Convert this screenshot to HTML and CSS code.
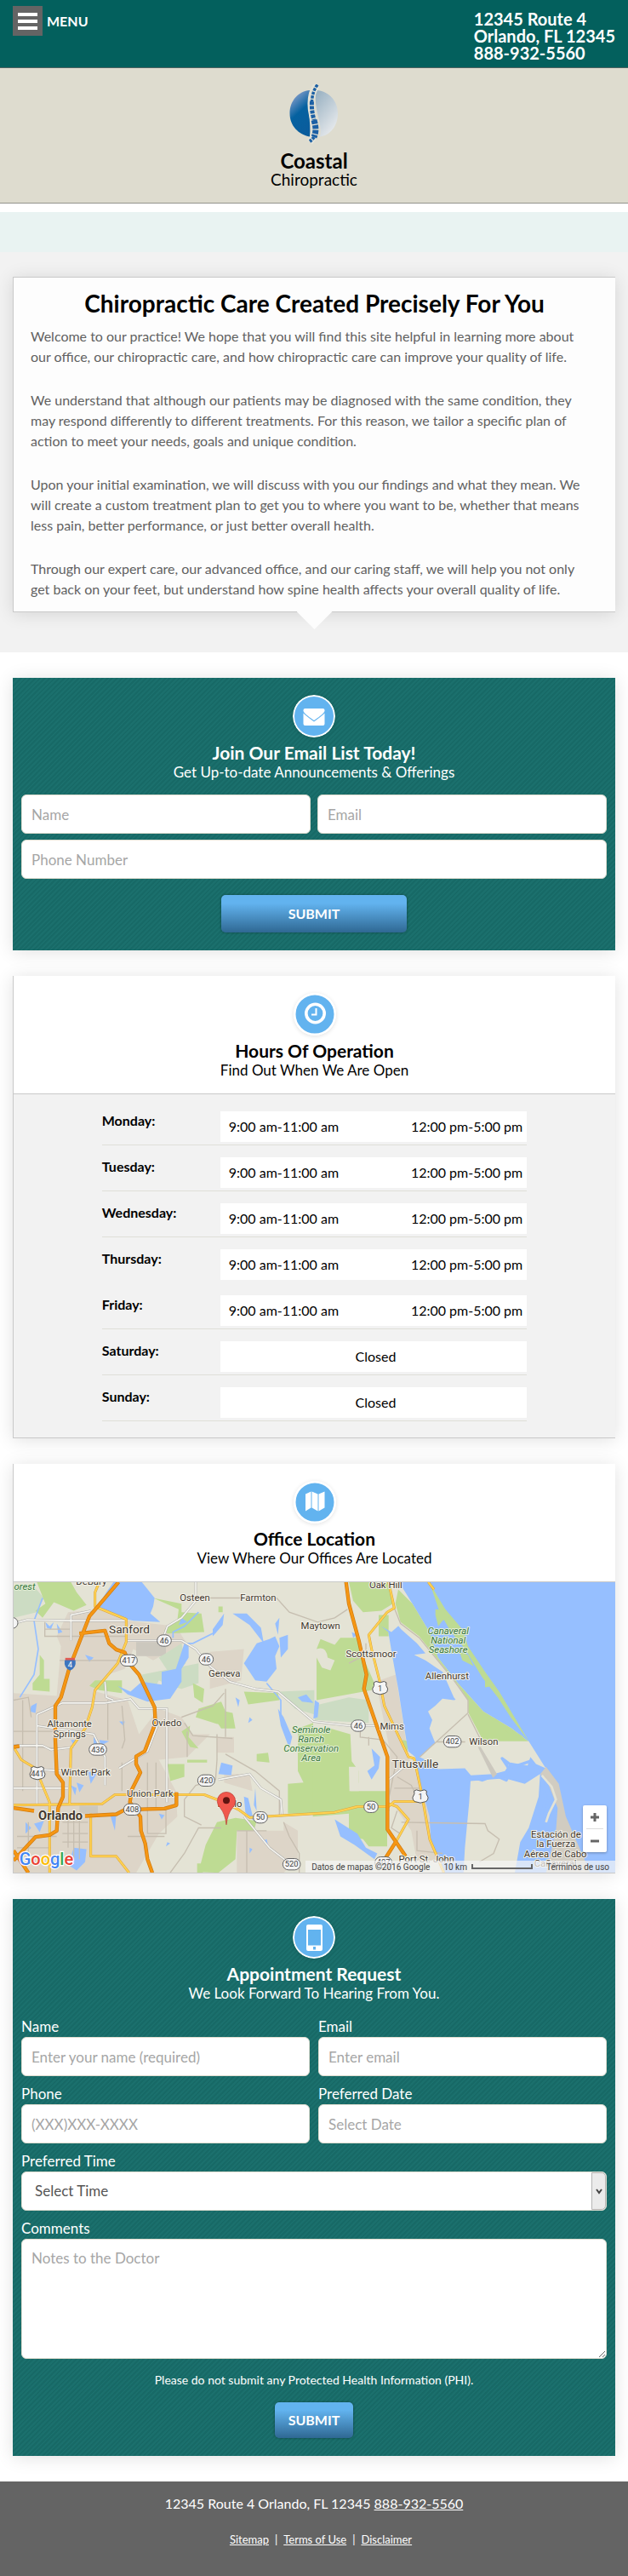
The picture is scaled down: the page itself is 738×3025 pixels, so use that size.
FILE: index.html
```html
<!DOCTYPE html>
<html lang="en">
<head>
<meta charset="utf-8">
<meta name="viewport" content="width=device-width, initial-scale=1">
<title>Coastal Chiropractic</title>
<link rel="stylesheet" href="styles.css">
</head>
<body>
<header class="topbar">
  <button class="menu" type="button">
    <span class="menu-icon"><span class="bar"></span><span class="bar"></span><span class="bar"></span></span>
    <span>MENU</span>
  </button>
  <address class="address">12345 Route 4<br>Orlando, FL 12345<br>888-932-5560</address>
</header>

<section class="brand">
  <svg class="brand-logo" viewBox="0 0 58 70" aria-hidden="true">
    <defs>
      <linearGradient id="lobe-left" x1="0.2" y1="0" x2="0.6" y2="1"><stop offset="0.1" stop-color="#7d9ac8"/><stop offset="0.5" stop-color="#0561a0"/><stop offset="1" stop-color="#0a5c9c"/></linearGradient>
      <linearGradient id="lobe-right" x1="0" y1="0" x2="0.6" y2="1"><stop offset="0.1" stop-color="#9db4c4"/><stop offset="1" stop-color="#e6e9ec"/></linearGradient>
    </defs>
    <path d="M24 7C11 8 0.500 19 0.500 34S11 59 24 61.500C26 44 20 27 24 7Z" fill="url(#lobe-left)"/>
    <path d="M32 7C46 8 57 19 57 34S48 60 36 61.500C40 46 27 28 32 7Z" fill="url(#lobe-right)"/>
    <path d="M32 1C24 12 25 27 27 36S34 58 24 68" fill="none" stroke="#e4e3d8" stroke-width="8"/>
    <path d="M33 0.500C29 6 27 12 26.500 20" fill="none" stroke="#1c60a4" stroke-width="3.500" stroke-dasharray="3.500 1.200"/>
    <path d="M26.500 20C26 28 27 34 29 42" fill="none" stroke="#1c60a4" stroke-width="5" stroke-dasharray="4 1.300"/>
    <path d="M29 42C31 49 32 55 29 62" fill="none" stroke="#1c60a4" stroke-width="7" stroke-dasharray="4.600 1.300"/>
    <path d="M29 62Q27 65 24 67" fill="none" stroke="#1c60a4" stroke-width="4" stroke-dasharray="3 1.200"/>
  </svg>
  <p class="brand-name">Coastal</p>
  <p class="brand-kind">Chiropractic</p>
</section>
<div class="strip"></div>

<main>
<section class="intro">
  <article class="card welcome">
    <h1>Chiropractic Care Created Precisely For You</h1>
    <p>Welcome to our practice! We hope that you will find this site helpful in learning more about our office, our chiropractic care, and how chiropractic care can improve your quality of life.</p>
    <p>We understand that although our patients may be diagnosed with the same condition, they may respond differently to different treatments. For this reason, we tailor a specific plan of action to meet your needs, goals and unique condition.</p>
    <p>Upon your initial examination, we will discuss with you our findings and what they mean. We will create a custom treatment plan to get you to where you want to be, whether that means less pain, better performance, or just better overall health.</p>
    <p>Through our expert care, our advanced office, and our caring staff, we will help you not only get back on your feet, but understand how spine health affects your overall quality of life.</p>
  </article>
</section>

<div class="stack">
<section class="panel">
  <div class="head">
    <svg class="badge" viewBox="0 0 50 50" aria-hidden="true"><circle cx="25" cy="25" r="24" fill="#62b3ef" stroke="#fff" stroke-width="2"/><path d="M14.500 16h21q2 0 2 2v1Q37 22 25 30 13 22 12.500 19v-1q0-2 2-2Z" fill="#fff"/><path d="M12.500 21.500Q16 25 25 31.500 34 25 37.500 21.500V34q0 2-2 2h-21q-2 0-2-2Z" fill="#fff"/></svg>
    <h2>Join Our Email List Today!</h2>
    <p class="sub">Get Up-to-date Announcements &amp; Offerings</p>
  </div>
  <form class="signup">
    <input class="field" type="text" placeholder="Name" aria-label="Name">
    <input class="field" type="email" placeholder="Email" aria-label="Email">
    <input class="field full" type="tel" placeholder="Phone Number" aria-label="Phone Number">
    <button class="submit wide" type="button">SUBMIT</button>
  </form>
</section>

<section class="card section-card">
  <div class="head">
    <svg class="badge" viewBox="0 0 50 50" aria-hidden="true"><circle cx="25" cy="25" r="24" fill="#62b3ef" stroke="#fff" stroke-width="3"/><circle cx="25.500" cy="24" r="10.700" fill="none" stroke="#fff" stroke-width="3.600"/><path d="M26.500 18v7.500H21" fill="none" stroke="#fff" stroke-width="2"/></svg>
    <h2>Hours Of Operation</h2>
    <p class="sub">Find Out When We Are Open</p>
  </div>
  <div class="hours-body">
    <table class="hours">
      <tbody>
        <tr><th scope="row">Monday:</th><td><div class="slot"><span>9:00 am-11:00 am</span><span>12:00 pm-5:00 pm</span></div></td></tr>
        <tr><th scope="row">Tuesday:</th><td><div class="slot"><span>9:00 am-11:00 am</span><span>12:00 pm-5:00 pm</span></div></td></tr>
        <tr><th scope="row">Wednesday:</th><td><div class="slot"><span>9:00 am-11:00 am</span><span>12:00 pm-5:00 pm</span></div></td></tr>
        <tr class="plain"><th scope="row">Thursday:</th><td><div class="slot"><span>9:00 am-11:00 am</span><span>12:00 pm-5:00 pm</span></div></td></tr>
        <tr><th scope="row">Friday:</th><td><div class="slot"><span>9:00 am-11:00 am</span><span>12:00 pm-5:00 pm</span></div></td></tr>
        <tr><th scope="row">Saturday:</th><td><div class="slot closed">Closed</div></td></tr>
        <tr><th scope="row">Sunday:</th><td><div class="slot closed">Closed</div></td></tr>
      </tbody>
    </table>
  </div>
</section>

<section class="card section-card">
  <div class="head">
    <svg class="badge" viewBox="0 0 50 50" aria-hidden="true"><circle cx="25" cy="25" r="24" fill="#62b3ef" stroke="#fff" stroke-width="3"/><path d="M14 15.500L20.500 12.500V31.500L14 35.500ZM21.500 12.500L28.500 15.500V35.500L21.500 31.500ZM29.500 15.500L36.500 12.500V31.500L29.500 35.500Z" fill="#fff"/></svg>
    <h2>Office Location</h2>
    <p class="sub">View Where Our Offices Are Located</p>
  </div>
  <div class="map">
    <svg class="map-art" viewBox="48 24 2121 1024" preserveAspectRatio="xMidYMid slice" role="img" aria-label="Map of Orlando and Titusville">
      <defs>
        <g id="shield"><path d="M-22 -20L-14 -24 0 -20 14 -24 22 -20Q18 -10 27 2 27 16 16 18L0 22-16 18Q-27 16-27 2-18-10-22-20Z" fill="#f4f4f4" stroke="#555" stroke-width="3"/></g>
      </defs>
      <rect x="40" y="20" width="2140" height="1040" fill="#e4e3d5"/>
      <!-- urban areas -->
      <g fill="#ddd5c8">
        <path d="M48 415L200 425 215 250 200 215 240 130 360 120 450 160 620 180 655 235 540 300 470 260 440 330 380 350 340 410 450 440 490 560 560 470 640 500 680 560 740 560 660 640 560 650 620 760 625 850 560 910 480 1048 48 1048Z"/>
        <path d="M740 270L860 260 850 370 740 400ZM765 570H825V625H765ZM870 900H1000V870L1050 900V1000L1000 1048H835V900ZM790 700L880 700 890 760 790 730Z"/>
        <path d="M1325 375L1395 350 1440 640 1470 700 1525 870 1560 1000 1470 1010 1450 900 1375 790 1375 620Z"/>
      </g>
      <path d="M480 235H585V285H480ZM280 812H345V840H280Z" fill="#ccc8be"/>
      <!-- parks and reserves -->
      <g fill="#ccdcc3">
        <path d="M48 40H120L155 80 130 130 48 150ZM560 290L640 240 655 310 600 350 580 320ZM500 350L700 310 700 380 640 400 600 390 560 370 540 410 500 380ZM980 410L1108 405V490L1040 470ZM1104 460L1230 430 1300 440V520L1110 510Z"/>
      </g>
      <g fill="#bedb93">
        <path d="M130 24H250L270 60 305 105 260 125 190 95 150 150 125 125 160 100ZM540 80L630 120 625 160 580 190 590 205 720 200 710 135 640 130 640 100ZM335 370L430 370 430 415 350 405 315 390ZM140 280L155 300 155 365 175 365 175 410 115 405 115 380 140 350ZM680 380L720 400 715 450 685 430ZM700 470L780 445 795 480 820 485 830 540 780 540 770 525 690 500ZM860 410L980 415 985 440 875 455ZM905 630L945 625 950 660 905 655ZM1050 540L1104 520V840H1015V735L1070 730 1050 690ZM765 870L830 855 905 865 895 900H835L830 1000 770 1048 700 1045 725 950ZM640 550L670 530 665 570 700 610 670 605ZM590 665L650 665 650 710 600 725ZM660 650H730V660H660ZM770 110H785V130H770ZM695 1015H715V1048H695Z"/>
        <path d="M1103 540L1165 540 1235 560 1240 655 1265 690V730L1235 760H1365V955L1300 955 1280 930 1230 920V840L1103 850ZM1116 260L1130 225 1180 245 1200 220 1265 220 1285 300 1320 380 1310 405 1116 440 1116 390ZM1230 24H1370L1385 100 1345 125 1280 130 1245 90ZM1335 140H1370V215H1335ZM1420 580L1440 585 1435 630 1415 600Z"/>
      </g>
      <path d="M1104 265Q1150 240 1155 290L1180 300 1165 335 1135 325 1116 290Z" fill="#e4e3d5"/>
      <path d="M1230 675H1265V760H1232Z" fill="#e4e3d5"/>
      <!-- ocean, lagoons and lakes -->
      <g fill="#96bfff">
        <path d="M1344 180L1369 200 1384 290 1404 400 1424 530 1439 620 1464 640 1484 740 1514 850 1519 930 1564 1048H2180V24H1405L1394 100 1414 170 1380 200Z"/>
        <path d="M375 60L400 24H500L545 80 540 110 530 135 565 165 470 160 420 150 345 110ZM415 390L460 410 500 375 570 385 570 340 620 330 650 240 665 240 665 290 640 330 640 375 600 435 520 445 450 420ZM905 240L950 225 970 215 985 250 970 285 975 330 940 375 900 370 860 310ZM985 220L1015 210V260L990 290ZM780 660L820 670 815 705 770 700ZM980 470L1000 500 1030 570 1020 610 990 530ZM1310 610L1340 640 1335 680 1310 720 1295 690 1320 670ZM260 960L305 965 300 1010 270 1040 240 1020ZM1180 860L1260 910 1290 960 1330 980 1320 1000 1250 950 1200 920ZM270 730L295 740 280 765ZM110 460L130 450 125 485 105 480Z"/>
        <path d="M160 165l15 15 15-15-10 25-15-5ZM200 170l20 30-15 5ZM300 280l30 10-15 15ZM120 875l35-10-15 40ZM90 870l20 20-20 20ZM250 580l25 0-15 20ZM310 690l30 10-20 35ZM330 570l20 25-20 5ZM390 850l20-10-5 60ZM250 740l20 10-5 25ZM860 780l15 5 20 80-30-30ZM880 500l10 10-15 10ZM900 750l5 80-10-20ZM970 170l15-20-5 60ZM750 190l40-55-5 40-35 40ZM820 135l50 0 50 50 10 55-50-65ZM640 150l20 15-30 10ZM560 840l20 5-10 15ZM880 960l10 5-10 15ZM590 940l10 5-15 10ZM930 935l10-5 5 20ZM420 515l20 0-5 15ZM1240 200l20 10-15 10ZM1050 430l30-10 25 30-40-5ZM830 430l15 10-5 25ZM350 580l35 5-30 15ZM1110 440l15 10-5 50-15 5Z"/>
      </g>
      <path d="M150 80L120 160 135 260 120 350 70 430M700 130L650 180 610 200 610 220M760 200L680 240 660 240M940 380L990 440 990 490" fill="none" stroke="#96bfff" stroke-width="5"/>
      <!-- barrier islands -->
      <path d="M1394 60L1410 30 1454 100 1514 200 1544 290 1614 380 1704 480 1804 540 1864 586 1704 586 1649 490 1600 430 1560 340 1500 300 1460 280 1500 275 1470 240 1414 190 1390 160Z" fill="#e4e3d5"/>
      <path d="M1404 50L1454 100 1514 200 1544 290 1614 380 1704 480 1804 540 1864 586H1704L1651 490V440L1614 385 1538 290 1478 215 1412 165 1394 100Z" fill="#bedb93"/>
      <path d="M1514 24L1540 70 1570 120 1630 190 1650 250 1710 340 1760 410 1865 586 1800 500 1755 430 1700 360 1640 260 1590 200 1550 130Z" fill="#bedb93"/>
      <path d="M1535 120l40 5-10 10 20 10-25 15-15 20-10-40ZM1620 270l30 10 20 40-40-20ZM1710 360l30 30-30 5ZM1740 500l50 40 60 30-60-15Z" fill="#bedb93"/>
      <path d="M1509 480L1534 460 1560 435 1600 440 1634 430 1649 480 1704 585 1864 585 1924 680 1890 665 1870 640 1860 670 1800 660 1780 690 1740 700 1660 705 1639 680 1544 683 1520 660 1479 640 1534 590 1514 540 1524 510Z" fill="#e4e3d5"/>
      <path d="M1659 725L1780 715 1850 735 1904 700 1899 780 1864 890 1834 940 1815 1048H1634L1639 960 1654 800Z" fill="#e4e3d5"/>
      <path d="M1640 705L1700 722 1745 705 1785 722 1800 690 1770 645 1810 675 1870 655 1900 690M1910 720L1925 790 1905 860" fill="none" stroke="#96bfff" stroke-width="10" stroke-linejoin="round"/>
      <path d="M1925 675L1970 735 1995 850 2060 1000 2080 1048H1925L1960 900 1966 820 1935 740 1905 700Z" fill="#d1ccc1"/>
      <path d="M1910 705L1945 745 1960 790 1935 840 1925 870" fill="none" stroke="#e4e3d5" stroke-width="8"/>
      <path d="M1685 605H1695L1752 700 1738 714Z" fill="#ccc8be"/>
      <!-- minor roads -->
      <g fill="none" stroke="#c6beb0" stroke-width="4">
        <path d="M740 80H975L1020 130 1120 165 1180 150 1225 120M158 165V215H445M160 190H250M210 300H430M795 400V570M765 560V650L760 720 690 740 650 790V850L710 880M870 900V1048M1000 870L1020 920 1055 980V1048M835 900H940M640 500L750 460 790 415M650 520L680 565 820 575M795 630L900 690 985 760V850M660 640V550M520 660V910H585V820M430 660V760M550 660V820M380 440V580M430 460L440 580 430 610M48 440L100 430 110 500M48 550H210M48 600 210 610M80 440V760M60 920H200M60 960H180M100 870V1010M220 870H310M220 910H310M220 940H310M260 840V1000M280 840V1000M240 840V960M600 1048L650 980 700 890 780 890M450 920H580M1270 530V570L1350 580 1400 640 1370 790M1300 570V600M1400 710L1450 740 1470 780M1390 750H1480M1400 830L1380 890 1410 910M1415 870 1520 872 1710 875 1720 900 1760 930 1740 980 1690 1010M1480 640L1650 485 1650 440 1600 370 1535 290 1478 220 1412 170 1390 115M1650 490 1700 590M1540 587H1640M1470 900V970L1560 980M1290 240V280L1230 310"/>
      </g>
      <path d="M48 170L95 157 250 160H445M250 230V140L320 125M690 24V90L640 150 590 180 570 235M450 230H640L690 260 740 320 810 375 900 400 980 410 1104 515 1230 530H1330M130 810V490L220 450 370 450 460 435 490 470H588V800M370 375 375 430 400 440M48 600L150 600 180 615 260 605M130 530L330 560 370 640V740M150 685L220 690M420 680L470 650 520 620 555 530M770 720L880 700 920 750 990 790 995 850M48 750H240M860 850L950 960 1040 1030M1370 830V720L1430 670" fill="none" stroke="#aaa" stroke-width="8"/>
      <path d="M48 170L95 157 250 160H445M250 230V140L320 125M690 24V90L640 150 590 180 570 235M450 230H640L690 260 740 320 810 375 900 400 980 410 1104 515 1230 530H1330M130 810V490L220 450 370 450 460 435 490 470H588V800M370 375 375 430 400 440M48 600L150 600 180 615 260 605M130 530L330 560 370 640V740M150 685L220 690M420 680L470 650 520 620 555 530M770 720L880 700 920 750 990 790 995 850M48 750H240M860 850L950 960 1040 1030M1370 830V720L1430 670" fill="none" stroke="#f6f5ef" stroke-width="5"/>
      <!-- main roads -->
      <g fill="none" stroke-linejoin="round">
        <g stroke="#dba23a" stroke-width="9"><path d="M350 24L335 60 335 110 445 155V235L415 310 335 405 325 465 300 540 250 610 245 810M48 605L75 650 125 680 175 800V1048M48 810L360 805 405 773H720L790 800 840 825 880 853 1180 835 1260 815 1370 815 1390 797 1485 797M320 840V990H410L455 1048M1510 24L1530 50M1370 24L1390 115 1365 130 1300 210 1310 260 1340 380 1355 460 1440 640 1460 645 1485 760 1515 930 1565 1048M1370 805L1400 815 1440 860 1395 940"/></g>
        <path d="M350 24L335 60 335 110 445 155V235L415 310 335 405 325 465 300 540 250 610 245 810M48 605L75 650 125 680 175 800V1048M48 810L360 805 405 773H720L790 800 840 825 880 853 1180 835 1260 815 1370 815 1390 797 1485 797M320 840V990H410L455 1048M1510 24L1530 50M1370 24L1390 115 1365 130 1300 210 1310 260 1340 380 1355 460 1440 640 1460 645 1485 760 1515 930 1565 1048M1370 805L1400 815 1440 860 1395 940" stroke="#ffd251" stroke-width="6"/>
        <g stroke="#cf7a10" stroke-width="13"><path d="M418 24L315 145 245 325 215 430 195 460V580L200 700 222 730V780L205 820 200 900 175 915 125 922 48 1005M280 205L370 195 385 240 410 262 440 272 455 310 490 350 545 465 548 520 510 620 480 638 480 665 495 695 465 755 458 800 495 850 497 900 512 945 520 1000 537 1048M48 820L120 830M300 848L410 842 440 826 580 822 622 810V765M48 605L68 602M1220 24L1230 100 1265 230 1292 350 1283 400 1366 640V895L1430 990M1395 940L1360 995M48 970 100 1048"/></g>
        <path d="M418 24L315 145 245 325 215 430 195 460V580L200 700 222 730V780L205 820 200 900 175 915 125 922 48 1005M280 205L370 195 385 240 410 262 440 272 455 310 490 350 545 465 548 520 510 620 480 638 480 665 495 695 465 755 458 800 495 850 497 900 512 945 520 1000 537 1048M48 820L120 830M300 848L410 842 440 826 580 822 622 810V765M48 605L68 602M1220 24L1230 100 1265 230 1292 350 1283 400 1366 640V895L1430 990M1395 940L1360 995M48 970 100 1048" stroke="#f59613" stroke-width="9"/>
      </g>
      <!-- road shields -->
      <g fill="#f4f4f4" stroke="#666" stroke-width="3">
        <rect x="554" y="210" width="50" height="40" rx="20"/><rect x="702" y="276" width="50" height="40" rx="20"/><rect x="424" y="280" width="60" height="40" rx="20"/><rect x="314" y="594" width="62" height="40" rx="20"/><rect x="697" y="703" width="60" height="40" rx="20"/><rect x="436" y="805" width="60" height="40" rx="20"/><rect x="893" y="833" width="50" height="40" rx="20"/><rect x="997" y="998" width="62" height="40" rx="20"/><rect x="1238" y="510" width="50" height="40" rx="20"/><rect x="1283" y="796" width="50" height="40" rx="20"/><rect x="1564" y="566" width="62" height="40" rx="20"/><rect x="1322" y="992" width="60" height="40" rx="20"/><circle cx="44" cy="168" r="19"/>
      </g>
      <use href="#shield" x="132" y="698"/><use href="#shield" x="1340" y="398"/><use href="#shield" x="1482" y="780"/>
      <path d="M228 300Q248 288 266 300 270 326 247 336 224 326 228 300Z" fill="#3d75be"/><path d="M230 291H264V299H230Z" fill="#e25a52"/>
      <g class="map-num">
        <text x="579" y="240">46</text><text x="727" y="306">46</text><text x="454" y="310">417</text><text x="345" y="624">436</text><text x="727" y="733">420</text><text x="466" y="835">408</text><text x="918" y="863">50</text><text x="1028" y="1028">520</text><text x="1263" y="540">46</text><text x="1308" y="826">50</text><text x="1595" y="596">402</text><text x="1352" y="1022">407</text><text x="132" y="709">441</text><text x="1340" y="409">1</text><text x="1482" y="791">1</text><text class="interstate" x="247" y="326">4</text>
      </g>
      <g class="map-place">
        <text x="322" y="32">DeBary</text><text x="687" y="92">Osteen</text><text x="910" y="92">Farmton</text><text x="1130" y="190">Maytown</text><text x="791" y="358">Geneva</text><text x="588" y="531">Oviedo</text><text x="245" y="535">Altamonte</text><text x="245" y="572">Springs</text><text x="302" y="706">Winter Park</text><text x="529" y="780">Union Park</text><text x="810" y="818">Bithlo</text><text x="1308" y="289">Scottsmoor</text><text x="1360" y="46">Oak Hill</text><text x="1576" y="366">Allenhurst</text><text x="1382" y="543">Mims</text><text x="1705" y="598">Wilson</text><text x="1504" y="1012">Port St. John</text><text x="1960" y="925">Estación de</text><text x="1960" y="959">la Fuerza</text><text x="1958" y="993">Aérea de Cabo</text><text x="1958" y="1027">Cañaveral</text>
        <text class="town" x="456" y="204">Sanford</text><text class="town" x="1464" y="678">Titusville</text><text class="city" x="213" y="863">Orlando</text>
      </g>
      <g class="map-park"><text x="87" y="52">orest</text><text x="1097" y="556">Seminole</text><text x="1097" y="588">Ranch</text><text x="1097" y="622">Conservation</text><text x="1097" y="655">Area</text><text x="1580" y="207">Canaveral</text><text x="1580" y="240">National</text><text x="1580" y="273">Seashore</text></g>
      <path d="M798 879Q794 840 776 819A32 32 0 1 1 820 819Q802 840 798 879Z" fill="#f1574c" stroke="#b63a32" stroke-width="2"/><circle cx="798" cy="793" r="12" fill="#5f1410"/>
      <text class="map-logo" x="68" y="1022"><tspan fill="#4285f4">G</tspan><tspan fill="#ea4335">o</tspan><tspan fill="#fbbc05">o</tspan><tspan fill="#4285f4">g</tspan><tspan fill="#34a853">l</tspan><tspan fill="#ea4335">e</tspan></text>
    </svg>
    <div class="zoom"><button type="button" aria-label="Zoom in"><svg viewBox="0 0 12 12"><path d="M1 6H11M6 1V11"/></svg></button><button type="button" aria-label="Zoom out"><svg viewBox="0 0 12 12"><path d="M1 6H11"/></svg></button></div>
    <div class="credit"><span>Datos de mapas ©2016 Google</span><span class="scale">10 km <span class="ruler"></span></span><span>Términos de uso</span></div>
  </div>
</section>

<section class="panel">
  <div class="head">
    <svg class="badge" viewBox="0 0 50 50" aria-hidden="true"><circle cx="25" cy="25" r="24" fill="#62b3ef" stroke="#fff" stroke-width="2"/><path fill-rule="evenodd" d="M18 10H33Q35 10 35 12V39Q35 41 33 41H18Q16 41 16 39V12Q16 10 18 10ZM18 16V34.500H33V16ZM24 36V39.500H27V36Z" fill="#fff"/></svg>
    <h2>Appointment Request</h2>
    <p class="sub">We Look Forward To Hearing From You.</p>
  </div>
  <form class="request">
    <div class="group"><label for="name">Name</label><input class="field" id="name" type="text" placeholder="Enter your name (required)"></div>
    <div class="group"><label for="email">Email</label><input class="field" id="email" type="email" placeholder="Enter email"></div>
    <div class="group"><label for="phone">Phone</label><input class="field" id="phone" type="tel" placeholder="(XXX)XXX-XXXX"></div>
    <div class="group"><label for="date">Preferred Date</label><input class="field" id="date" type="text" placeholder="Select Date"></div>
    <div class="group full"><label for="time">Preferred Time</label>
      <div class="select-wrap"><select class="field" id="time"><option>Select Time</option><option>Morning</option><option>Afternoon</option></select><span class="arrow"><svg viewBox="0 0 10 8"><path d="M2 2L5 6 8 2"/></svg></span></div></div>
    <div class="group full"><label for="comments">Comments</label><textarea class="field" id="comments" placeholder="Notes to the Doctor"></textarea></div>
    <p class="note">Please do not submit any Protected Health Information (PHI).</p>
    <button class="submit" type="button">SUBMIT</button>
  </form>
</section>
</div>
</main>

<footer class="footer">
  <p class="contact">12345 Route 4 Orlando, FL 12345 <a href="tel:8889325560">888-932-5560</a></p>
  <nav class="links"><a href="#">Sitemap</a><span>|</span><a href="#">Terms of Use</a><span>|</span><a href="#">Disclaimer</a></nav>
</footer>
</body>
</html>
```
FILE: styles.css
```css
* { box-sizing: border-box; }
body { margin: 0; font-family: Lato, "Open Sans", sans-serif; font-size: 16px; line-height: 24px; color: #000; background: #fff; }
h1, h2, p { margin: 0; }
button, input, select, textarea { font: inherit; }

.topbar { display: flex; justify-content: space-between; align-items: flex-start; padding: 7px 15px; background: #03605d; border-bottom: 1px solid #4d6360; color: #fff; }
.menu { display: flex; align-items: center; gap: 5px; padding: 0; border: 0; background: none; color: #fff; font-size: 16px; font-weight: 700; }
.menu-icon { display: flex; flex-direction: column; justify-content: center; gap: 4px; width: 35px; height: 35px; padding: 0 6px; background: #646464; }
.bar { height: 4px; background: #fff; }
.address { padding-top: 5px; font-style: normal; font-size: 20px; line-height: 20px; font-weight: 700; }

.brand { display: flex; flex-direction: column; align-items: center; padding: 19px 0 18px; background: #dedccf; border-bottom: 1px solid #93938b; }
.brand-logo { width: 58px; height: 70px; margin-bottom: 8px; }
.brand-name { font-size: 24px; line-height: 24px; font-weight: 700; }
.brand-kind { font-size: 19px; line-height: 19px; }
.strip { height: 47px; margin-top: 10px; background: #e9f3f2; }

.intro { padding: 29px 15px 47px; background: #f2f2f2; }
.card { border: 1px solid #c9c9c9; border-right: 0; background: #fff; box-shadow: 0 2px 20px rgba(0, 0, 0, .12); }
.welcome { position: relative; padding: 10px 27px 14px 20px; background: #fdfdfd; }
.welcome::after { content: ""; position: absolute; left: 50%; bottom: -21px; width: 42px; height: 21px; margin-left: -21px; background: #fdfdfd; clip-path: polygon(0 0, 100% 0, 50% 100%); }
.welcome h1 { margin-bottom: 7px; padding-left: 7px; font-size: 28px; line-height: 40px; font-weight: 700; text-align: center; }
.welcome p { color: #616161; }
.welcome p + p { margin-top: 27px; }

.stack { display: flex; flex-direction: column; gap: 30px; padding: 30px 15px; }
.panel { padding-bottom: 21px; background: repeating-linear-gradient(135deg, #1b706d 0 2px, #176966 2px 4px); box-shadow: 0 2px 20px rgba(0, 0, 0, .12); color: #fff; }
.head { display: flex; flex-direction: column; align-items: center; padding: 20px 10px 12px; text-align: center; }
.badge { width: 50px; height: 50px; border-radius: 50%; box-shadow: 0 1px 5px rgba(0, 0, 0, .12); }
.head h2 { margin-top: 6px; font-size: 21px; line-height: 24px; font-weight: 700; }
.sub { font-size: 17px; line-height: 22px; }
.section-card { border-top: 0; }
.section-card .head { padding-bottom: 16px; border-bottom: 1px solid #c9c9c9; }

.field { display: block; width: 100%; height: 46px; padding: 0 11px; border: 1px solid #dedccf; border-radius: 6px; background: #fff; color: #555; font-size: 17px; }
.field::placeholder { color: #a6a6a6; opacity: 1; }
.signup { display: grid; grid-template-columns: 1fr 1fr; gap: 7px 8px; padding: 3px 10px 0; }
.full { grid-column: 1 / -1; }
.submit { justify-self: center; grid-column: 1 / -1; padding: 0 16px; height: 42px; border: 0; border-radius: 5px; background: linear-gradient(#62b3ef 0%, #62b3ef 22%, #2f6893 100%); box-shadow: 0 0 3px rgba(0, 0, 0, .4); color: #fff; font-size: 16px; font-weight: 700; }
.wide { width: 218px; height: 44px; margin-top: 12px; }

.hours-body { padding: 6px 16px 19px; background: #f2f2f2; }
.hours { width: 74%; margin: 0 auto; border-collapse: collapse; }
.hours tr { border-bottom: 1px solid #dfdfd8; }
.hours .plain { border-bottom-color: #f2f2f2; }
.hours th { width: 139px; padding: 14px 0 0; line-height: 22px; text-align: left; vertical-align: top; }
.hours td { padding: 14px 0 3px; }
.slot { display: flex; justify-content: space-between; padding: 7px 5px 7px 10px; background: #fff; line-height: 22px; }
.closed { justify-content: center; }

.map { position: relative; height: 341px; overflow: hidden; font-family: Roboto, sans-serif; }
.map-art { display: block; width: 100%; height: 100%; }
.map-place, .map-park, .map-num { text-anchor: middle; font-size: 34px; paint-order: stroke; stroke-linejoin: round; }
.map-place { fill: #42382f; stroke: #f4f2ea; stroke-width: 6px; }
.map-park { fill: #3a7741; stroke: #e4efd6; stroke-width: 6px; font-style: italic; }
.map-num { fill: #444; font-size: 28px; }
.interstate { fill: #fff; }
.town { font-size: 41px; }
.city { font-size: 44px; font-weight: 700; }
.map-logo { font-size: 60px; font-weight: 500; paint-order: stroke; stroke: #fff; stroke-width: 7px; }
.zoom { position: absolute; right: 10px; bottom: 24px; display: flex; flex-direction: column; width: 28px; padding: 0 4px; border-radius: 2px; background: #fff; box-shadow: 0 1px 3px rgba(0, 0, 0, .3); }
.zoom button { display: grid; place-items: center; height: 27px; padding: 0; border: 0; background: none; }
.zoom button + button { border-top: 1px solid #ddd; height: 28px; }
.zoom svg { width: 12px; height: 12px; fill: none; stroke: #666; stroke-width: 3; }
.credit { position: absolute; right: 0; bottom: 0; display: flex; gap: 16px; padding: 0 7px; height: 14px; background: rgba(245, 245, 245, .7); color: #444; font-size: 10px; line-height: 16px; }
.scale { display: flex; gap: 5px; }
.ruler { align-self: center; width: 72px; height: 6px; border: 2px solid #666; border-top: 0; }

.request { display: grid; grid-template-columns: 1fr 1fr; gap: 9px 10px; padding: 4px 10px 0; }
.group label { display: block; font-size: 17px; line-height: 24px; }
.group { min-width: 0; }
.select-wrap { position: relative; }
.select-wrap select { appearance: none; padding: 0 15px; }
.arrow { position: absolute; top: 1px; right: 1px; bottom: 1px; display: grid; place-items: center; width: 17px; border: 1px solid #b5b5b5; border-radius: 0 5px 5px 0; background: #ebebeb; pointer-events: none; }
.arrow svg { width: 10px; height: 8px; fill: none; stroke: #444; stroke-width: 2; }
textarea.field { height: 141px; padding: 10px 11px; resize: vertical; }
.note { grid-column: 1 / -1; padding: 6px 0 7px; font-size: 14px; line-height: 20px; text-align: center; }

.footer { padding: 14px 15px 31px; background: #646464; color: #fff; text-align: center; }
.footer a { color: #fff; }
.contact { line-height: 24px; }
.links { display: flex; justify-content: center; gap: 7px; margin-top: 18px; padding-left: 16px; font-size: 13px; line-height: 24px; }
```
